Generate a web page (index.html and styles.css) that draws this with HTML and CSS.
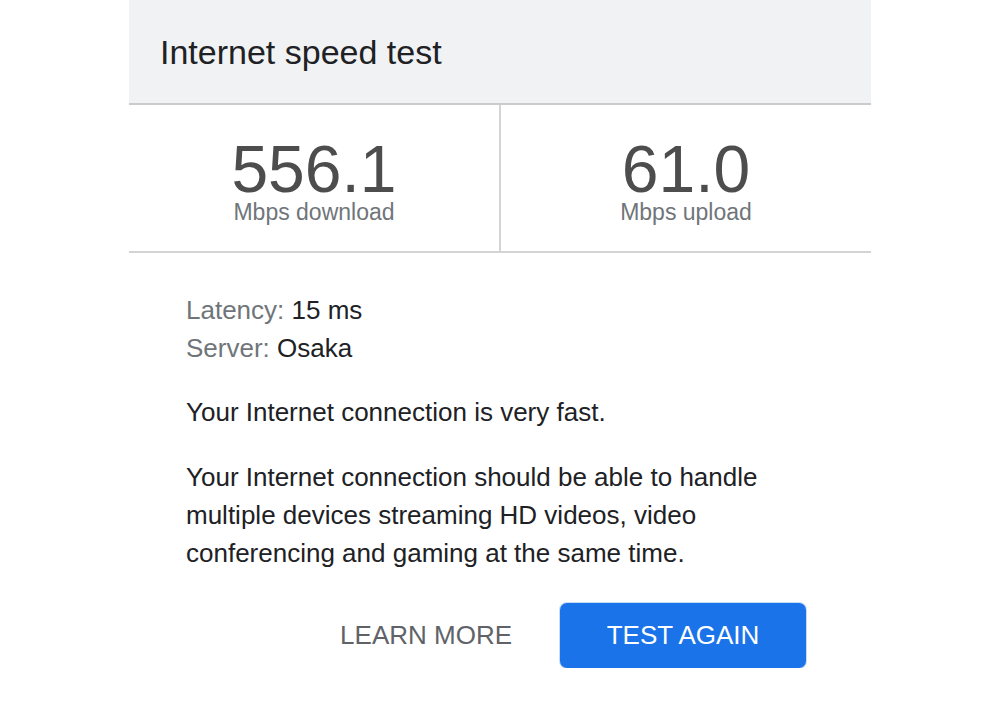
FILE: index.html
```html
<!DOCTYPE html>
<html lang="en">
<head>
<meta charset="utf-8">
<title>Internet speed test</title>
<link rel="stylesheet" href="styles.css">
</head>
<body>
<div class="card">
  <div class="header">Internet speed test</div>
  <div class="stats">
    <div class="stat">
      <div class="num">556.1</div>
      <div class="label">Mbps download</div>
    </div>
    <div class="divider"></div>
    <div class="stat">
      <div class="num">61.0</div>
      <div class="label">Mbps upload</div>
    </div>
  </div>
  <div class="info">
    <div class="line"><span class="key">Latency:</span> 15 ms</div>
    <div class="line"><span class="key">Server:</span> Osaka</div>
    <p class="fast">Your Internet connection is very fast.</p>
    <p class="desc">Your Internet connection should be able to handle multiple devices streaming HD videos, video conferencing and gaming at the same time.</p>
    <div class="actions">
      <button class="btn-text">LEARN MORE</button>
      <button class="btn-primary">TEST AGAIN</button>
    </div>
  </div>
</div>
</body>
</html>
```
FILE: styles.css
```css
html, body {
  margin: 0;
  padding: 0;
  background: #ffffff;
}
body {
  font-family: "Liberation Sans", Arial, Helvetica, sans-serif;
  color: #202124;
}
.card {
  width: 742px;
  margin-left: 129px;
}
.header {
  height: 103px;
  background: #f1f2f4;
  display: flex;
  align-items: center;
  padding-left: 31px;
  font-size: 34px;
  line-height: 34px;
  color: #202124;
  border-bottom: 2px solid #cbcbcb;
}
.stats {
  display: flex;
  border-bottom: 2px solid #d4d4d4;
}
.stat {
  flex: 1;
  text-align: center;
  padding-top: 34px;
  padding-bottom: 26px;
}
.divider {
  width: 2px;
  background: #d4d4d4;
}
.num {
  font-size: 66px;
  line-height: 60px;
  color: #4d4d4d;
}
.label {
  font-size: 23px;
  line-height: 26px;
  color: #70757a;
}
.info {
  padding: 38px 57px 0 57px;
  font-size: 26px;
}
.line {
  line-height: 38px;
}
.key {
  color: #70757a;
}
.fast {
  margin: 26px 0 0 0;
  line-height: 38px;
}
.desc {
  margin: 27px 0 0 0;
  line-height: 38px;
  width: 620px;
}
.actions {
  display: flex;
  justify-content: flex-end;
  align-items: center;
  gap: 48px;
  margin-top: 31px;
  padding-right: 8px;
}
.btn-text {
  border: none;
  background: transparent;
  font-family: inherit;
  font-size: 26px;
  color: #5f6368;
  padding: 0;
}
.btn-primary {
  border: none;
  background: #1a73e8;
  color: #ffffff;
  font-family: inherit;
  font-size: 26px;
  width: 246px;
  height: 65px;
  border-radius: 7px;
  box-shadow: 0 0 0 1px rgba(26, 115, 232, 0.25);
}
```
